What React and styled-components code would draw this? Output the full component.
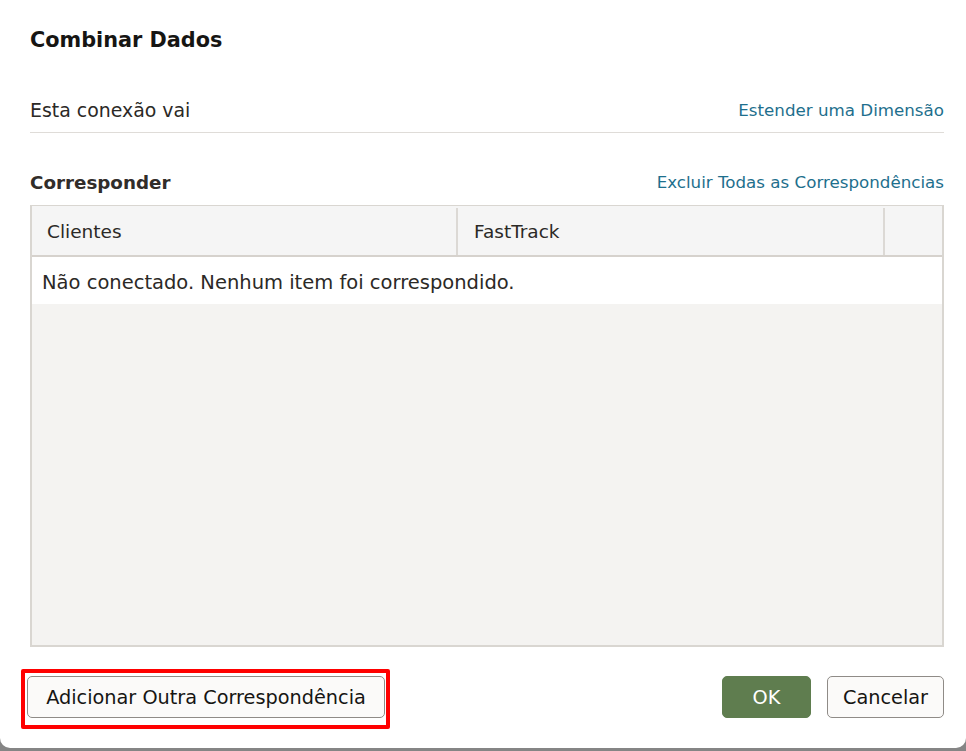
import React from "react";
import styled, { createGlobalStyle } from "styled-components";

const GlobalStyle = createGlobalStyle`
  html, body {
    margin: 0;
    padding: 0;
    background: #858585;
    font-family: "DejaVu Sans", "Noto Sans", sans-serif;
    color: #161513;
  }
`;

const Dialog = styled.div`
  width: 966px;
  height: 748px;
  background: #ffffff;
  border-radius: 0 0 10px 10px;
  box-sizing: border-box;
  display: flex;
  flex-direction: column;
  padding: 0 22px 0 30px;
`;

const Title = styled.h1`
  margin: 0;
  padding-top: 26px;
  height: 28px;
  font-size: 20.8px;
  line-height: 28px;
  font-weight: 700;
  color: #161513;
`;

const Row = styled.div`
  display: flex;
  align-items: center;
  justify-content: space-between;
  height: ${(props) => props.height}px;
  margin-top: ${(props) => props.top || 0}px;
  border-bottom: ${(props) => (props.divider ? "1px solid #dfdcd8" : "none")};
  box-sizing: border-box;
`;

const Label = styled.span`
  font-size: ${(props) => (props.bold ? 18.3 : 18.9)}px;
  font-weight: ${(props) => (props.bold ? 700 : 400)};
  color: ${(props) => (props.bold ? "#312d2a" : "#2b2926")};
`;

const Action = styled.a`
  font-size: 16.7px;
  color: #1e6f8d;
  text-decoration: none;
  cursor: pointer;
`;

const Table = styled.div`
  margin-top: 9px;
  height: 442px;
  border: 2px solid #d9d6d1;
  border-top-width: 1px;
  box-sizing: border-box;
  background: #f4f3f1;
  display: flex;
  flex-direction: column;
`;

const HeadRow = styled.div`
  display: grid;
  grid-template-columns: 426px 427px 1fr;
  height: 51px;
  background: #f5f5f5;
  border-bottom: 2px solid #d6d2cd;
  box-sizing: border-box;
`;

const HeadCell = styled.div`
  display: flex;
  align-items: center;
  padding-left: ${(props) => props.pad}px;
  font-size: 18.5px;
  color: #2b2926;
  border-right: ${(props) => (props.last ? "none" : "2px solid #dcd9d5")};
  margin: 2px 0 0;
`;

const EmptyRow = styled.div`
  height: 47px;
  box-sizing: border-box;
  padding: 3px 0 0 10px;
  background: #ffffff;
  display: flex;
  align-items: center;
  font-size: 19.5px;
  color: #2b2926;
`;

const Footer = styled.div`
  display: flex;
  align-items: flex-start;
  justify-content: space-between;
  margin-top: 22px;
  margin-left: -9px;
`;

const Highlight = styled.div`
  border: 4px solid #ff0000;
  border-radius: 2px;
  padding: 3px 1px 7px 2px;
`;

const Button = styled.button`
  width: ${(props) => props.width}px;
  height: 42px;
  padding: 0;
  font-family: "DejaVu Sans", "Noto Sans", sans-serif;
  font-size: 19.3px;
  border-radius: 5px;
  cursor: pointer;
  border: 1px solid ${(props) => (props.primary ? "#5f7d4f" : "#8f8b87")};
  background: ${(props) => (props.primary ? "#5f7d4f" : "#fbfaf9")};
  color: ${(props) => (props.primary ? "#ffffff" : "#161513")};
  font-weight: 400;
`;

const ButtonGroup = styled.div`
  display: flex;
  gap: 16px;
  padding-top: 7px;
`;

export default function App() {
  return (
    <>
      <GlobalStyle />
      <Dialog>
        <Title>Combinar Dados</Title>
        <Row height={45} top={34} divider>
          <Label>Esta conexão vai</Label>
          <Action>Estender uma Dimensão</Action>
        </Row>
        <Row height={28} top={35}>
          <Label bold>Corresponder</Label>
          <Action>Excluir Todas as Correspondências</Action>
        </Row>
        <Table>
          <HeadRow>
            <HeadCell pad={15}>Clientes</HeadCell>
            <HeadCell pad={16}>FastTrack</HeadCell>
            <HeadCell last />
          </HeadRow>
          <EmptyRow>Não conectado. Nenhum item foi correspondido.</EmptyRow>
        </Table>
        <Footer>
          <Highlight>
            <Button width={358}>Adicionar Outra Correspondência</Button>
          </Highlight>
          <ButtonGroup>
            <Button primary width={89}>OK</Button>
            <Button width={117}>Cancelar</Button>
          </ButtonGroup>
        </Footer>
      </Dialog>
    </>
  );
}
